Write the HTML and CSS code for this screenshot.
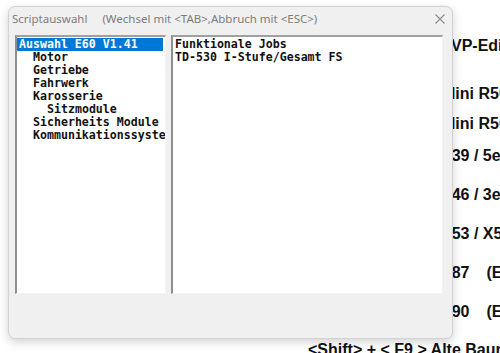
FILE: index.html
```html
<!DOCTYPE html>
<html lang="de">
<head>
  <meta charset="UTF-8">
  <meta name="viewport" content="width=device-width, initial-scale=1.0">
  <title>Scriptauswahl</title>
  <link rel="stylesheet" href="styles.css">
</head>
<body>
  <!-- Hauptfenster im Hintergrund -->
  <div class="backdrop">
    <div class="bg-row first">VP-Edition</div>
    <div class="bg-row r2 shift-m">Mini R50</div>
    <div class="bg-row r3 shift-m">Mini R50</div>
    <div class="bg-row r4">E39 / 5er</div>
    <div class="bg-row">E46 / 3er</div>
    <div class="bg-row">E53 / X5</div>
    <div class="bg-row">E87<span class="sub">(E81)</span></div>
    <div class="bg-row">E90<span class="sub">(E91)</span></div>
    <div class="bg-row hint">&lt;Shift&gt; + &lt; F9 &gt; Alte Baureihen</div>
  </div>

  <!-- Dialog -->
  <div class="dialog">
    <div class="titlebar">
      <span class="title">Scriptauswahl</span>
      <span class="subtitle">(Wechsel mit &lt;TAB&gt;,Abbruch mit &lt;ESC&gt;)</span>
      <svg class="close" width="10" height="10" viewBox="0 0 10 10">
        <path d="M0.5 0.5 L9.5 9.5 M9.5 0.5 L0.5 9.5" stroke="#8a8a8a" stroke-width="1.1" fill="none"/>
      </svg>
    </div>
    <div class="lists">
      <ul class="listbox tree">
        <li class="selected">Auswahl E60 V1.41</li>
        <li class="lvl1">Motor</li>
        <li class="lvl1">Getriebe</li>
        <li class="lvl1">Fahrwerk</li>
        <li class="lvl1">Karosserie</li>
        <li class="lvl2">Sitzmodule</li>
        <li class="lvl1">Sicherheits Module</li>
        <li class="lvl1">Kommunikationssysteme</li>
      </ul>
      <ul class="listbox jobs">
        <li>Funktionale Jobs</li>
        <li>TD-530 I-Stufe/Gesamt FS</li>
      </ul>
    </div>
  </div>
</body>
</html>
```
FILE: styles.css
```css
body {
    margin: 0;
    background-color: #fff;
    font-family: "Liberation Sans", Arial, sans-serif;
    overflow: hidden;
}

.backdrop {
    padding-top: 37px;
    height: 353px;
    box-sizing: border-box;
    overflow: hidden;
}

.bg-row {
    font-size: 16px;
    font-weight: bold;
    line-height: 18px;
    color: #111;
    padding-left: 441px;
    margin-top: 21px;
    white-space: nowrap;
}

.bg-row.first {
    margin-top: 0;
    padding-left: 451px;
}

.bg-row.r2 {
    margin-top: 30px;
}

.bg-row.r3 {
    margin-top: 12px;
}

.bg-row.r4 {
    margin-top: 14px;
}

.bg-row.shift-m {
    padding-left: 442px;
}

.bg-row .sub {
    margin-left: 17px;
}

.bg-row.hint {
    padding-left: 308px;
    margin-top: 20px;
}

/* Dialogfenster */
.dialog {
    position: absolute;
    left: 8px;
    top: 6px;
    width: 445px;
    height: 333px;
    box-sizing: border-box;
    background-color: #f0f0f0;
    border: 1px solid #d2d2d2;
    border-radius: 7px;
    box-shadow: 0 3px 10px rgba(0,0,0,0.18);
    display: flex;
    flex-direction: column;
}

.titlebar {
    height: 23px;
    display: flex;
    align-items: center;
    padding-left: 3px;
    padding-right: 7px;
    font-family: "Noto Sans", "Open Sans", sans-serif;
    font-size: 11.5px;
    color: #7c7c7c;
}

.titlebar .subtitle {
    margin-left: 15px;
}

.titlebar .close {
    margin-left: auto;
}

.lists {
    display: flex;
    gap: 5px;
    padding: 5px 9px 0 6px;
}

.listbox {
    list-style: none;
    margin: 0;
    padding: 1px 0 0 0;
    height: 259px;
    box-sizing: border-box;
    background-color: #fff;
    border-top: 2px solid #a0a0a0;
    border-left: 2px solid #8e8e8e;
    border-right: 1px solid #f4f4f4;
    border-bottom: 1px solid #f4f4f4;
    font-family: "DejaVu Sans Mono", "Liberation Mono", monospace;
    font-weight: bold;
    font-size: 11.6px;
    line-height: 13px;
    color: #111;
    overflow: hidden;
    white-space: nowrap;
}

.listbox li {
    padding-left: 2px;
    height: 13px;
}

.tree {
    width: 151px;
}

.jobs {
    flex: 1;
}

.tree .lvl1 {
    padding-left: 16px;
}

.tree .lvl2 {
    padding-left: 30px;
}

.tree .selected {
    background-color: #0078d7;
    color: #fff;
    margin-right: 2px;
}
```
